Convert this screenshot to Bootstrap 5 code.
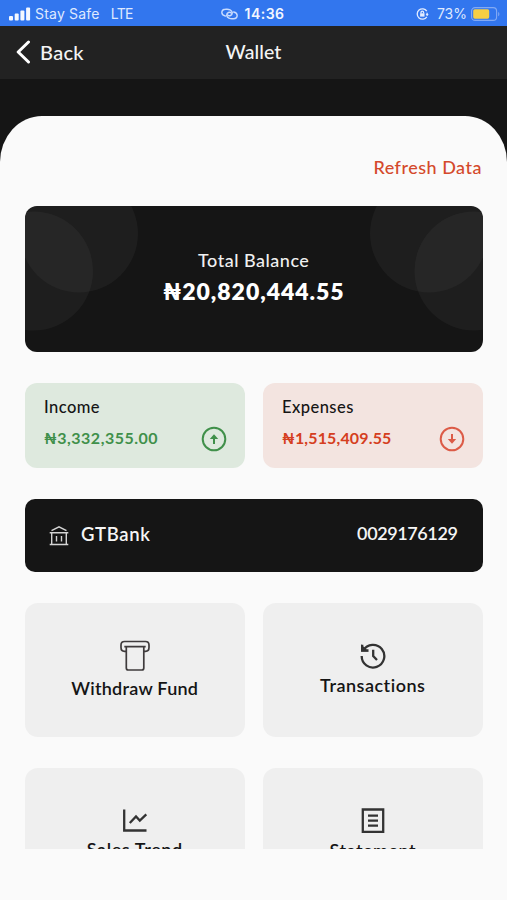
<!DOCTYPE html>
<html lang="en">
<head>
<meta charset="utf-8">
<meta name="viewport" content="width=device-width, initial-scale=1">
<title>Wallet</title>
<link href="https://cdn.jsdelivr.net/npm/bootstrap@5.3.0/dist/css/bootstrap.min.css" rel="stylesheet">
<style>
  body { font-family: Lato, "Open Sans", sans-serif; background: #151515; color: #151515; height: 900px; overflow: hidden; line-height: 1.2; }
  svg { display: block; flex: none; }
  .statusbar { height: 26px; background: #3276ee; color: #dfe9ff; font-family: Inter, sans-serif; font-size: 14px; padding: 2px 7px 0 9px; }
  .status-side { flex: 1 1 0; }
  .carrier { letter-spacing: .2px; margin-left: 4px; }
  .network { letter-spacing: -.6px; margin-left: 11px; }
  .clock { letter-spacing: .5px; color: #f2f6ff; margin-left: 6px; }
  .link-glyph { margin-left: -3px; }
  .topbar { height: 53px; background: #222; color: #f4f4f4; font-size: 20px; font-weight: 500; padding: 0 16px 2px; }
  .back-label { letter-spacing: .3px; margin-left: 9px; }
  .page-title { font-size: 19.5px; letter-spacing: .05px; }
  .sheet { margin-top: 37px; height: 784px; background: #fafafa; border-radius: 42px 42px 0 0 / 46px 46px 0 0; padding: 0 24.5px 0 25px; }
  .refresh { height: 89.5px; padding: 14px .5px 0 0; color: #d4492b; font-size: 18px; font-weight: 500; letter-spacing: .5px; }
  .balance { height: 146px; border-radius: 12px; background: #151515; color: #fff; padding-bottom: 3px; }
  .balance-label { font-size: 18px; font-weight: 500; letter-spacing: .5px; line-height: 22px; color: #f0f0f0; }
  .balance-sum { font-size: 23px; font-weight: 800; letter-spacing: .95px; line-height: 30px; margin-top: 5px; }
  .scroll-area { height: 733px; overflow: hidden; }
  .two-up { display: grid; grid-template-columns: 1fr 1fr; column-gap: 18.5px; }
  .flow { height: 85px; border-radius: 12px; padding: 13px 18px 0 19px; margin-top: 31.5px; }
  .flow-name { font-size: 16.5px; font-weight: 500; letter-spacing: .45px; line-height: 22px; }
  .flow-row { margin-top: 7.5px; }
  .flow-sum { font-size: 16px; line-height: 20px; padding-bottom: 2px; }
  .income { background: #dee9de; } .income .flow-sum, .income svg { color: #40904a; } .income .flow-sum { letter-spacing: .5px; }
  .expense { background: #f3e4e0; } .expense .flow-sum { color: #d53e20; letter-spacing: .15px; } .expense svg { color: #dc5b47; }
  .account { height: 73px; border-radius: 10px; background: #151515; color: #f5f5f5; margin-top: 31px; padding: 0 25px 3px 24px; font-size: 18px; }
  .bank-name { font-size: 18.5px; letter-spacing: .65px; }
  .acct-no { letter-spacing: -.4px; }
  .tile { height: 134px; border-radius: 13px; background: #efefef; margin-top: 31px; font-size: 18px; letter-spacing: .5px; line-height: 22px; }
  .tile.tall-icon { padding-top: 37px; } .tile.std-icon { padding-top: 39px; }
  .withdraw { letter-spacing: .25px; margin-top: 6px; }
  .sales { letter-spacing: .6px; margin-top: 3px; }
</style>
<script src="https://cdn.jsdelivr.net/npm/bootstrap@5.3.0/dist/js/bootstrap.bundle.min.js"></script>
</head>
<body>
<header class="statusbar d-flex align-items-center">
  <div class="status-side d-flex align-items-center">
    <svg width="22" height="14" viewBox="0 0 22 14" fill="#f4f8ff"><rect x="0" y="9" width="4" height="4.5" rx="1"/><rect x="5.7" y="6.5" width="4" height="7" rx="1"/><rect x="11.4" y="3.5" width="4" height="10" rx="1"/><rect x="17.1" y="0.5" width="4" height="13" rx="1"/></svg>
    <span class="carrier">Stay Safe</span><span class="network">LTE</span>
  </div>
  <svg class="link-glyph" width="17" height="12" viewBox="0 0 17 12" fill="none" stroke="#c9dcff" stroke-width="1.4" stroke-linecap="round"><path d="M4.300 8C-.5 7-.2 1.500 4.500 1.300C8 .8 11 2 11.300 4.600C11.400 7.500 8 8.700 6.600 6.800"/><path d="M12.700 4C17.500 5 17.200 10.500 12.500 10.700C9 11.200 6 10 5.700 7.400C5.600 4.500 9 3.300 10.400 5.200"/></svg>
  <span class="clock fw-semibold">14:36</span>
  <div class="status-side d-flex align-items-center justify-content-end">
    <svg width="13" height="12" viewBox="0 0 13 12" fill="none" stroke="#e4edff" stroke-width="1.3"><path d="M10.800 3.200A5.200 5.200 0 1 0 10.800 8.800M11.100 4.800V7.500"/><path d="M9.700 6H12.700L11.200 8Z" fill="#e4edff" stroke="none"/><rect x="4.100" y="5.300" width="4.400" height="3.300" fill="#e4edff" stroke="none"/><path d="M5 5.500V4.500a1.300 1.300 0 0 1 2.600 0v1"/></svg>
    <span class="percent ms-2">73%</span>
    <svg class="ms-1" width="29" height="14" viewBox="0 0 29 14"><rect x=".6" y=".6" width="25" height="12.800" rx="3.500" fill="none" stroke="#83aaf4" stroke-width="1.100"/><rect x="2.200" y="2.300" width="16" height="9.400" rx="1.600" fill="#f5ce45"/><path d="M27.200 5v4.300c1.600-.6 1.600-3.700 0-4.300" fill="#83aaf4"/></svg>
  </div>
</header>
<nav class="topbar d-flex align-items-center">
  <div class="status-side d-flex align-items-center">
    <svg width="15" height="24" viewBox="0 0 15 24" fill="none" stroke="#fff" stroke-width="3" stroke-linecap="round" stroke-linejoin="round"><path d="M12.500 2L2.200 12L12.500 22"/></svg>
    <span class="back-label">Back</span>
  </div>
  <span class="page-title">Wallet</span>
  <div class="status-side"></div>
</nav>
<main class="sheet">
  <div class="scroll-area">
    <div class="refresh d-flex align-items-center justify-content-end"><span class="refresh-text">Refresh Data</span></div>
    <section class="balance position-relative overflow-hidden d-flex flex-column align-items-center justify-content-center">
      <svg class="position-absolute top-0 start-0 w-100 h-100" viewBox="0 0 457.500 146" fill="#fff" fill-opacity=".04"><circle cx="54" cy="27.500" r="59"/><circle cx="8.500" cy="65" r="59.500"/><circle cx="404" cy="27.500" r="59"/><circle cx="449" cy="65" r="59.500"/></svg>
      <div class="balance-label position-relative">Total Balance</div>
      <div class="balance-sum position-relative">₦20,820,444.55</div>
    </section>
    <section class="two-up">
      <div class="flow income">
        <div class="flow-name">Income</div>
        <div class="flow-row d-flex align-items-center justify-content-between"><span class="flow-sum fw-bold">₦3,332,355.00</span>
          <svg width="26" height="26" viewBox="0 0 26 26" fill="none" stroke="currentColor" stroke-width="2"><circle cx="13" cy="13" r="11.300"/><path d="M13 18V11.500"/><path d="M8.800 13L13 8.300L17.200 13Z" fill="currentColor" stroke="none"/></svg></div>
      </div>
      <div class="flow expense">
        <div class="flow-name">Expenses</div>
        <div class="flow-row d-flex align-items-center justify-content-between"><span class="flow-sum fw-bold">₦1,515,409.55</span>
          <svg width="26" height="26" viewBox="0 0 26 26" fill="none" stroke="currentColor" stroke-width="2"><circle cx="13" cy="13" r="11.300"/><path d="M13 8V14.500"/><path d="M8.800 13L13 17.700L17.200 13Z" fill="currentColor" stroke="none"/></svg></div>
      </div>
    </section>
    <section class="account d-flex align-items-center justify-content-between">
      <div class="d-flex align-items-center">
        <svg class="mt-1" width="20" height="20" viewBox="0 0 20 20" fill="none" stroke="#d5d5d5" stroke-width="1.400"><path d="M2.500 4.700L10 .9L17.500 4.700M.7 6.800H19.300M2.700 6.800V18.500M17.300 6.800V18.500M.7 18.500H19.300M7.500 10V15.500M12.500 10V15.500"/></svg>
        <span class="bank-name fw-semibold ms-2 ps-1">GTBank</span>
      </div>
      <span class="acct-no fw-semibold">0029176129</span>
    </section>
    <section class="two-up">
      <div class="tile tall-icon d-flex flex-column align-items-center">
        <svg width="30" height="31" viewBox="0 0 30 31" fill="none" stroke="#3f3b3c" stroke-width="1.700" stroke-linejoin="round"><path d="M6.300 11.300H4.500Q1 11.300 1 7.500V5Q1 1.500 4.500 1.500H25.500Q29 1.500 29 5V7.500Q29 11.300 25.500 11.300H23.800"/><path d="M4.300 6.700H25.700M6.300 6.700V28Q6.300 30 8.300 30H21.800Q23.800 30 23.800 28V6.700"/></svg>
        <span class="fw-semibold withdraw">Withdraw Fund</span>
      </div>
      <div class="tile std-icon d-flex flex-column align-items-center">
        <svg width="28" height="28" viewBox="0 0 28 28" fill="none" stroke="#333" stroke-width="2.300"><path d="M4.300 8.400A11.300 11.300 0 1 1 2.700 14M3.200 2.800V8.500H9.500M14.200 7.700V14L18 18"/><path d="M2 2.300V9.600H9.500Z" fill="#333" stroke="none"/></svg>
        <span class="mt-1 fw-semibold transactions">Transactions</span>
      </div>
      <div class="tile std-icon d-flex flex-column align-items-center">
        <svg width="28" height="28" viewBox="0 0 28 28" fill="none" stroke="#333" stroke-width="2.300"><path d="M3.200 2.500V23.500H25.500M8.800 16L15 9.500L18.800 13.500L25.300 7.300"/></svg>
        <span class="fw-semibold sales">Sales Trend</span>
      </div>
      <div class="tile std-icon d-flex flex-column align-items-center">
        <svg width="28" height="28" viewBox="0 0 28 28" fill="none" stroke="#333" stroke-width="2.300"><path d="M3.800 2.500H24.200V24.800H3.800ZM9 8.700H19M9 13.700H19M9 18.700H19"/></svg>
        <span class="mt-1 fw-semibold statement">Statement</span>
      </div>
    </section>
  </div>
</main>
</body>
</html>
